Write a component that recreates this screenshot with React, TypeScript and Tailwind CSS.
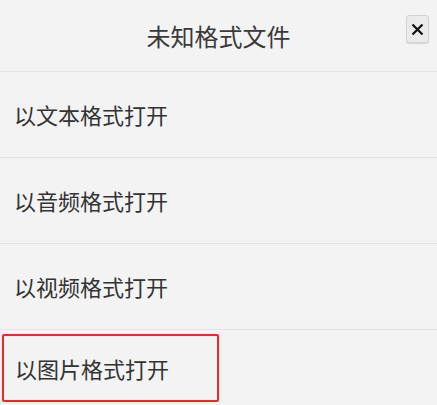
import React from 'react';

const options = ['以文本格式打开', '以音频格式打开', '以视频格式打开', '以图片格式打开'];

const App: React.FC = (): React.ReactElement => (
    <div
        className="h-[405px] w-[437px] overflow-hidden bg-[#f3f3f3] text-[#333]"
        style={{ fontFamily: '"Noto Sans CJK SC", "Noto Sans", sans-serif' }}
    >
        <div className="relative flex h-[72px] items-center justify-center border-b border-[#e2e2e2]">
            <span className="text-[24px] text-[#3a3a3a]">未知格式文件</span>
            <button className="absolute top-[15px] right-[8px] flex h-[28px] w-[23px] items-center justify-center rounded-[3px] border border-[#d2d2d2] bg-[#ebebeb] shadow-[0_1px_1px_rgba(0,0,0,0.12)]">
                <svg width="13" height="13" viewBox="0 0 13 13">
                    <path d="M1.5 1.5L11.5 11.5M11.5 1.5L1.5 11.5" stroke="#111" strokeWidth="2.2" />
                </svg>
            </button>
        </div>
        {options.map((label, i) => (
            <div
                key={label}
                className={
                    i < options.length - 1
                        ? 'flex h-[86px] items-center border-b border-[#e2e2e2] pl-[14px]'
                        : 'flex h-[74px] items-center pt-[2px] pl-[2px]'
                }
            >
                {i < options.length - 1 ? (
                    <span className="text-[22px]">{label}</span>
                ) : (
                    <div className="flex h-[68px] w-[217px] items-center rounded-[2px] border-2 border-[#f52525] pl-[11px]">
                        <span className="text-[22px]">{label}</span>
                    </div>
                )}
            </div>
        ))}
    </div>
);

export default App;
